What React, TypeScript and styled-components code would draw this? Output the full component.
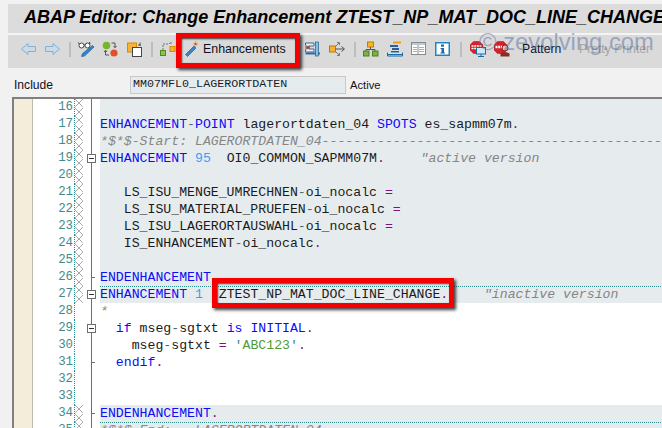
import React from "react";
import styled, { createGlobalStyle } from "styled-components";

const Global = createGlobalStyle`
  html, body { margin: 0; padding: 0; background: #f1f1f1; }
  #root { width: 662px; height: 428px; overflow: hidden; }
`;

const Page = styled.div`
  position: relative;
  width: 662px;
  height: 428px;
  overflow: hidden;
  padding: 4px 0 0 8px;
  box-sizing: border-box;
  background: #f1f1f1;
  font-family: "Liberation Sans", Arial, sans-serif;
  color: #111;
`;

const TitleBar = styled.div`
  height: 29px;
  box-sizing: content-box;
  display: flex;
  align-items: flex-start;
  padding-left: 16px;
  background: #dcdcdc;
  border-bottom: 2px solid #f4f4f4;
  white-space: nowrap;
  overflow: hidden;
`;

const Title = styled.h1`
  margin: 2px 0 0;
  font-size: 18px;
  line-height: 22px;
  font-weight: bold;
  font-style: italic;
  color: #000;
`;

const Toolbar = styled.div`
  height: 33px;
  box-sizing: border-box;
  display: flex;
  align-items: center;
  padding: 0 0 5px 13px;
  background: #dadada;
`;

const Slot = styled.div<{ $w: number }>`
  flex: 0 0 ${(p) => p.$w}px;
  width: ${(p) => p.$w}px;
  display: flex;
  align-items: center;
  height: 16px;
`;

const Sep = styled.div`
  width: 2px;
  height: 15px;
  background: #bdbdbd;
`;

const Label = styled.span<{ $off?: boolean }>`
  font-size: 12.2px;
  color: ${(p) => (p.$off ? "#a6a6a6" : "#10101c")};
  white-space: nowrap;
`;

const EnhButton = styled.div`
  flex: 0 0 120px;
  display: flex;
  align-items: center;
  gap: 4px;
`;

const EnhText = styled.span`
  font-size: 12.4px;
  color: #10101c;
`;

const InfoRow = styled.div`
  height: 29px;
  display: flex;
  align-items: center;
  padding-top: 4px;
  box-sizing: border-box;
`;

const FieldLabel = styled.label`
  width: 122px;
  padding-left: 6px;
  box-sizing: border-box;
  font-size: 12.1px;
  color: #10101c;
`;

const Field = styled.div`
  width: 216px;
  height: 18px;
  box-sizing: border-box;
  border: 1px solid #c9c9c9;
  background: #e6ecee;
  padding-left: 2px;
  font-family: "Liberation Mono", monospace;
  font-size: 11.7px;
  line-height: 14px;
  color: #1c1c28;
`;

const Status = styled.span`
  margin-left: 4px;
  font-size: 11.2px;
  color: #10101c;
`;

const Editor = styled.div`
  margin-left: 4px;
  border-top: 2px solid #808080;
  border-left: 2px solid #808080;
  background: #fff;
`;

const Row = styled.div`
  display: flex;
  height: 17px;
`;

const Beige = styled.div`
  flex: 0 0 18px;
  background: #f3edda;
  border-right: 1px solid #bdb9ac;
`;

const LineNo = styled.div`
  flex: 0 0 41px;
  box-sizing: border-box;
  padding-right: 1px;
  text-align: right;
  font-family: "Liberation Mono", monospace;
  font-size: 12.4px;
  line-height: 17px;
  color: #3f8b8e;
  background: #fff;
`;

const MarkCell = styled.div`
  flex: 0 0 9px;
  box-sizing: border-box;
  border-left: 1px dotted #2f8f8f;
  background: #fff;
  display: flex;
`;

const FoldCell = styled.div`
  position: relative;
  flex: 0 0 17px;
  background: #fff;
  &::before {
    content: "";
    position: absolute;
    left: 8px;
    top: 0;
    bottom: 0;
    width: 1px;
    background: #6e6e6e;
  }
`;

const FoldBox = styled.div`
  position: absolute;
  left: 4px;
  top: 4px;
  width: 9px;
  height: 9px;
  box-sizing: border-box;
  border: 1px solid #6e6e6e;
  background: #fff;
  &::after {
    content: "";
    position: absolute;
    left: 1px;
    right: 1px;
    top: 3px;
    height: 1px;
    background: #333;
  }
`;

const Tick = styled.div`
  position: absolute;
  left: 9px;
  top: 8px;
  width: 3px;
  height: 1px;
  background: #6e6e6e;
`;

const Code = styled.div<{ $tint: boolean; $dotted: boolean }>`
  flex: 1;
  min-width: 0;
  overflow: hidden;
  box-sizing: border-box;
  white-space: pre;
  font-family: "Liberation Mono", monospace;
  font-size: 13.2px;
  line-height: 17px;
  color: #1a1a1a;
  background-color: ${(p) => (p.$tint ? "#e6ecee" : "#fff")};
  ${(p) =>
    p.$dotted
      ? `background-image: linear-gradient(to right, #2f8f8f 50%, transparent 50%); background-size: 2px 1px; background-repeat: repeat-x; background-position: 0 0;`
      : ""}
`;

const Kw = styled.span`
  color: #0c0cf5;
`;
const Num = styled.span`
  color: #3b9df0;
`;
const Dot = styled.span`
  color: #80107f;
`;
const Hy = styled.span`
  color: #4d6a70;
`;
const Str = styled.span`
  color: #4f9a38;
`;
const Quote = styled.span`
  color: #2f8f8f;
`;
const Cm = styled.span<{ $nudge?: number }>`
  color: #858585;
  font-style: italic;
  margin-left: ${(p) => p.$nudge ?? 0}px;
`;

const Annot = styled.div<{ $x: number; $y: number; $w: number; $h: number }>`
  position: absolute;
  left: ${(p) => p.$x}px;
  top: ${(p) => p.$y}px;
  width: ${(p) => p.$w}px;
  height: ${(p) => p.$h}px;
  box-sizing: border-box;
  border: 5px solid #f40000;
  box-shadow: 2px 2px 3px rgba(0, 0, 0, 0.75), inset 1px 1px 2px rgba(0, 0, 0, 0.75);
`;

const Watermark = styled.div`
  position: absolute;
  left: 479px;
  top: 26px;
  font-size: 23.8px;
  line-height: 32px;
  white-space: pre;
  color: rgba(88, 108, 160, 0.5);
`;

/* ---------- icons ---------- */
const Svg: React.FC<{ w?: number; children: React.ReactNode }> = ({ w = 16, children }) => (
  <svg width={w} height="16" viewBox={`0 0 ${w} 16`} fill="none" style={{ display: "block" }}>
    {children}
  </svg>
);

const Back = () => (
  <Svg>
    <path d="M0.5 8 L7 2.5 V5.5 H14.5 V10.5 H7 V13.5 Z" fill="#c7dbea" stroke="#86afd0" />
  </Svg>
);
const Forward = () => (
  <Svg>
    <path d="M14.5 8 L8 2.5 V5.5 H0.5 V10.5 H8 V13.5 Z" fill="#c7dbea" stroke="#86afd0" />
  </Svg>
);
const GlassesPencil = () => (
  <Svg>
    <circle cx="3.5" cy="4.5" r="2.5" fill="#fff" stroke="#444" />
    <circle cx="9.5" cy="4.5" r="2.5" fill="#fff" stroke="#444" />
    <path d="M6 4 H7 M1 3 L0.5 1.5 M12 3 L11.5 1" stroke="#444" />
    <path d="M14.5 4.5 L16 6 L6.5 15 L3.5 15.5 L4.5 12.5 Z" fill="#2f86cc" stroke="#1f5f9c" strokeWidth="0.7" />
  </Svg>
);
const Sync = () => (
  <Svg>
    <circle cx="4.5" cy="4.5" r="3.8" fill="#79b52c" />
    <circle cx="12" cy="12" r="3.6" fill="#e2502a" />
    <path d="M9.5 2 H13 V6 M11.5 5 L13 6.8 L14.5 5 M7 14 H3.5 V10 M2 11 L3.5 9.2 L5 11" stroke="#555" />
  </Svg>
);
const CopyBox = () => (
  <Svg>
    <rect x="0.5" y="2" width="9" height="9" fill="#f9b233" stroke="#d98a00" />
    <rect x="5.5" y="6.5" width="9" height="9" fill="#fff" stroke="#444" />
    <path d="M11 4 H14 M13 1.5 V5" stroke="#555" />
  </Svg>
);
const NodeLink = () => (
  <Svg>
    <rect x="0.5" y="9.5" width="5" height="5" fill="#90c050" stroke="#4f8a1e" />
    <rect x="10" y="5.5" width="5" height="5" fill="#f9b233" stroke="#d98a00" />
    <path d="M3 9 V3 H9 L11 1 M11 1 V4" stroke="#777" strokeDasharray="2 1" />
  </Svg>
);
const Wand = () => (
  <Svg w={14}>
    <path d="M9 5 L11 7 L2.5 15.5 L0.5 13.5 Z" fill="#3a86c8" stroke="#1f5f9c" strokeWidth="0.7" />
    <path d="M10.5 0 V5.5 M8 3 H13.5 M8.5 1 L12.5 5 M12.5 1 L8.5 5" stroke="#f2a33a" strokeWidth="0.8" />
    <circle cx="10.5" cy="3" r="1.1" fill="#e5352b" />
  </Svg>
);
const Clamp = () => (
  <Svg>
    <path d="M0.5 2 H9 V5 H4 V8 H9 V11 H0.5 V9 H1 V4 H0.5 Z" fill="#e8eef3" stroke="#2b6f9f" />
    <path d="M0.5 12.5 H15" stroke="#2b6f9f" strokeWidth="2" />
    <rect x="10.5" y="1" width="3" height="14" fill="#8dbfe0" stroke="#1c5f8f" strokeWidth="0.7" />
    <circle cx="3" cy="6.5" r="1.8" fill="#c4402a" />
  </Svg>
);
const ArrowTree = () => (
  <Svg>
    <rect x="0.5" y="5" width="6" height="6" fill="#f9b233" stroke="#b97a00" />
    <path d="M6.5 8 H15 M12.5 5.5 L15.5 8 L12.5 10.5" stroke="#555" />
    <path d="M7 5 L10 2 M8 1.5 H10.5 V4 M7 11 L10 14 M8 14.5 H10.5 V12" stroke="#777" />
  </Svg>
);
const Hierarchy = () => (
  <Svg>
    <rect x="4.5" y="1" width="6" height="5" fill="#f9b233" stroke="#c07f00" />
    <path d="M7.5 6 V9 M3 10 V8.5 H12 V10" stroke="#555" />
    <rect x="0.5" y="10" width="5.5" height="5" fill="#7cb23f" stroke="#4f7f22" />
    <rect x="9.5" y="10" width="5.5" height="5" fill="#7cb23f" stroke="#4f7f22" />
  </Svg>
);
const Stack = () => (
  <Svg>
    <rect x="6" y="0.5" width="8" height="2" fill="#f39c12" />
    <rect x="3" y="4" width="8" height="2" fill="#2b5f9f" />
    <rect x="5" y="7" width="7" height="2" fill="#2b5f9f" />
    <rect x="4" y="10" width="8" height="2" fill="#2b5f9f" />
    <path d="M0.5 11.5 V15 H15.5 V11.5" stroke="#1c6ba0" fill="#cfe4f2" />
    <path d="M1 13.5 H15" stroke="#1c6ba0" />
  </Svg>
);
const TableIcon = () => (
  <Svg>
    <rect x="0.5" y="1.5" width="14" height="12" fill="#fff" stroke="#8a8a8a" />
    <rect x="1" y="2" width="13" height="2" fill="#b8c9d8" />
    <path d="M2 6.5 H6 M2 8.5 H6 M2 10.5 H6 M8 6.5 H13 M8 8.5 H13 M8 10.5 H13" stroke="#9fb2c4" />
    <path d="M7 4 V13" stroke="#8a8a8a" />
  </Svg>
);
const Info = () => (
  <Svg>
    <rect x="0.75" y="1.75" width="13.5" height="12.5" fill="#fff" stroke="#1c86c8" strokeWidth="1.5" />
    <rect x="6" y="3.5" width="3" height="2.2" fill="#1668a8" />
    <path d="M5.5 7 H9 V11.5 H10 V12.5 H5.5 V11.5 H6.5 V8 H5.5 Z" fill="#1668a8" />
  </Svg>
);
const Octagon = () => (
  <path d="M3.5 0.5 H9.5 L13 4 V9 L9.5 12.5 H3.5 L0 9 V4 Z" fill="#d8202a" stroke="#a01018" strokeWidth="0.5" />
);
const StopMonitor = () => (
  <Svg>
    <Octagon />
    <path d="M1.5 5 H11.5 M1.5 7.5 H9" stroke="#fff" strokeWidth="1.4" strokeDasharray="2 0.7" />
    <rect x="6.5" y="6.5" width="9" height="6.5" fill="#cfe8f8" stroke="#1c6ba0" />
    <path d="M11 13 V15 M8 15.5 H14" stroke="#1c6ba0" />
  </Svg>
);
const StopPerson = () => (
  <Svg>
    <Octagon />
    <path d="M1.5 6 H9" stroke="#fff" strokeWidth="2.4" strokeDasharray="2 0.7" />
    <circle cx="11" cy="7" r="3" fill="#e8c8b0" stroke="#7a2020" />
    <path d="M6.5 15.5 V12.5 Q11 9.5 15.5 12.5 V15.5 Z" fill="#8a2a2a" />
  </Svg>
);
const XMark: React.FC = () => (
  <svg width="8" height="17" viewBox="0 0 8 17" style={{ display: "block" }}>
    <path d="M0 0 L8 8 M8 0 L0 8 M0 9 L8 17 M8 9 L0 17" stroke="#868686" strokeWidth="1" strokeDasharray="1 0.5" />
  </svg>
);

/* ---------- data ---------- */
type Line = {
  n: number;
  tint: boolean;
  mark?: boolean;
  fold?: boolean;
  tick?: boolean;
  dotted?: boolean;
  code?: React.ReactNode;
};

const lines: Line[] = [
  { n: 16, tint: true, mark: true },
  {
    n: 17,
    tint: true,
    mark: true,
    code: (
      <>
        <Kw>ENHANCEMENT</Kw><Hy>-</Hy><Kw>POINT</Kw> lagerortdaten_04 <Kw>SPOTS</Kw> es_sapmm07m<Dot>.</Dot>
      </>
    ),
  },
  {
    n: 18,
    tint: true,
    mark: true,
    code: <Cm>{"*$*$-Start: LAGERORTDATEN_04" + "-".repeat(60)}</Cm>,
  },
  {
    n: 19,
    tint: true,
    mark: true,
    fold: true,
    code: (
      <>
        <Kw>ENHANCEMENT</Kw> <Num>95</Num>{"  OI0_COMMON_SAPMM07M"}<Dot>.</Dot>{"    "}
        <Cm $nudge={4}>"active version</Cm>
      </>
    ),
  },
  { n: 20, tint: true, mark: true },
  {
    n: 21,
    tint: true,
    mark: true,
    code: (
      <>
        {"   LS_ISU_MENGE_UMRECHNEN"}<Hy>-</Hy>oi_nocalc <Dot>=</Dot>
      </>
    ),
  },
  {
    n: 22,
    tint: true,
    mark: true,
    code: (
      <>
        {"   LS_ISU_MATERIAL_PRUEFEN"}<Hy>-</Hy>oi_nocalc <Dot>=</Dot>
      </>
    ),
  },
  {
    n: 23,
    tint: true,
    mark: true,
    code: (
      <>
        {"   LS_ISU_LAGERORTAUSWAHL"}<Hy>-</Hy>oi_nocalc <Dot>=</Dot>
      </>
    ),
  },
  {
    n: 24,
    tint: true,
    mark: true,
    code: (
      <>
        {"   IS_ENHANCEMENT"}<Hy>-</Hy>oi_nocalc<Dot>.</Dot>
      </>
    ),
  },
  { n: 25, tint: true, mark: true },
  { n: 26, tint: true, mark: true, tick: true, code: <Kw>ENDENHANCEMENT</Kw> },
  {
    n: 27,
    tint: true,
    mark: true,
    fold: true,
    dotted: true,
    code: (
      <>
        <Kw>ENHANCEMENT</Kw> <Num>1</Num>{"  ZTEST_NP_MAT_DOC_LINE_CHANGE"}<Dot>.</Dot>{"    "}
        <Cm $nudge={4}>"inactive version</Cm>
      </>
    ),
  },
  { n: 28, tint: false, code: <Cm>*</Cm> },
  {
    n: 29,
    tint: false,
    fold: true,
    code: (
      <>
        {"  "}<Kw>if</Kw> mseg<Hy>-</Hy>sgtxt <Kw>is</Kw> <Kw>INITIAL</Kw><Dot>.</Dot>
      </>
    ),
  },
  {
    n: 30,
    tint: false,
    code: (
      <>
        {"    mseg"}<Hy>-</Hy>sgtxt <Dot>=</Dot> <Quote>'</Quote><Str>ABC123</Str><Quote>'</Quote><Dot>.</Dot>
      </>
    ),
  },
  {
    n: 31,
    tint: false,
    tick: true,
    code: (
      <>
        {"  "}<Kw>endif</Kw><Dot>.</Dot>
      </>
    ),
  },
  { n: 32, tint: false },
  { n: 33, tint: false },
  {
    n: 34,
    tint: true,
    mark: true,
    tick: true,
    code: (
      <>
        <Kw>ENDENHANCEMENT</Kw><Dot>.</Dot>
      </>
    ),
  },
  {
    n: 35,
    tint: true,
    mark: true,
    dotted: true,
    code: <Cm>*$*$-End:   LAGERORTDATEN_04</Cm>,
  },
];

export default function App() {
  return (
    <Page>
      <Global />
      <TitleBar>
        <Title>ABAP Editor: Change Enhancement ZTEST_NP_MAT_DOC_LINE_CHANGE</Title>
      </TitleBar>
      <Toolbar>
        <Slot $w={24}><Back /></Slot>
        <Slot $w={24}><Forward /></Slot>
        <Slot $w={9}><Sep /></Slot>
        <Slot $w={24}><GlassesPencil /></Slot>
        <Slot $w={25}><Sync /></Slot>
        <Slot $w={24}><CopyBox /></Slot>
        <Slot $w={9}><Sep /></Slot>
        <Slot $w={25}><NodeLink /></Slot>
        <EnhButton>
          <Wand />
          <EnhText>Enhancements</EnhText>
        </EnhButton>
        <Slot $w={24}><Clamp /></Slot>
        <Slot $w={25}><ArrowTree /></Slot>
        <Slot $w={9}><Sep /></Slot>
        <Slot $w={24}><Hierarchy /></Slot>
        <Slot $w={24}><Stack /></Slot>
        <Slot $w={24}><TableIcon /></Slot>
        <Slot $w={25}><Info /></Slot>
        <Slot $w={10}><Sep /></Slot>
        <Slot $w={24}><StopMonitor /></Slot>
        <Slot $w={28}><StopPerson /></Slot>
        <Slot $w={57}><Label>Pattern</Label></Slot>
        <Slot $w={75}><Label $off>Pretty Printer</Label></Slot>
      </Toolbar>
      <InfoRow>
        <FieldLabel>Include</FieldLabel>
        <Field>MM07MFL0_LAGERORTDATEN</Field>
        <Status>Active</Status>
      </InfoRow>
      <Editor>
        {lines.map((l) => (
          <Row key={l.n}>
            <Beige />
            <LineNo>{l.n}</LineNo>
            <MarkCell>{l.mark && <XMark />}</MarkCell>
            <FoldCell>
              {l.fold && <FoldBox />}
              {l.tick && <Tick />}
            </FoldCell>
            <Code $tint={l.tint} $dotted={!!l.dotted}>{l.code}</Code>
          </Row>
        ))}
      </Editor>
      <Annot $x={176} $y={33} $w={124} $h={35} />
      <Annot $x={212} $y={278} $w={242} $h={30} />
      <Watermark>© zevolving.com</Watermark>
    </Page>
  );
}
